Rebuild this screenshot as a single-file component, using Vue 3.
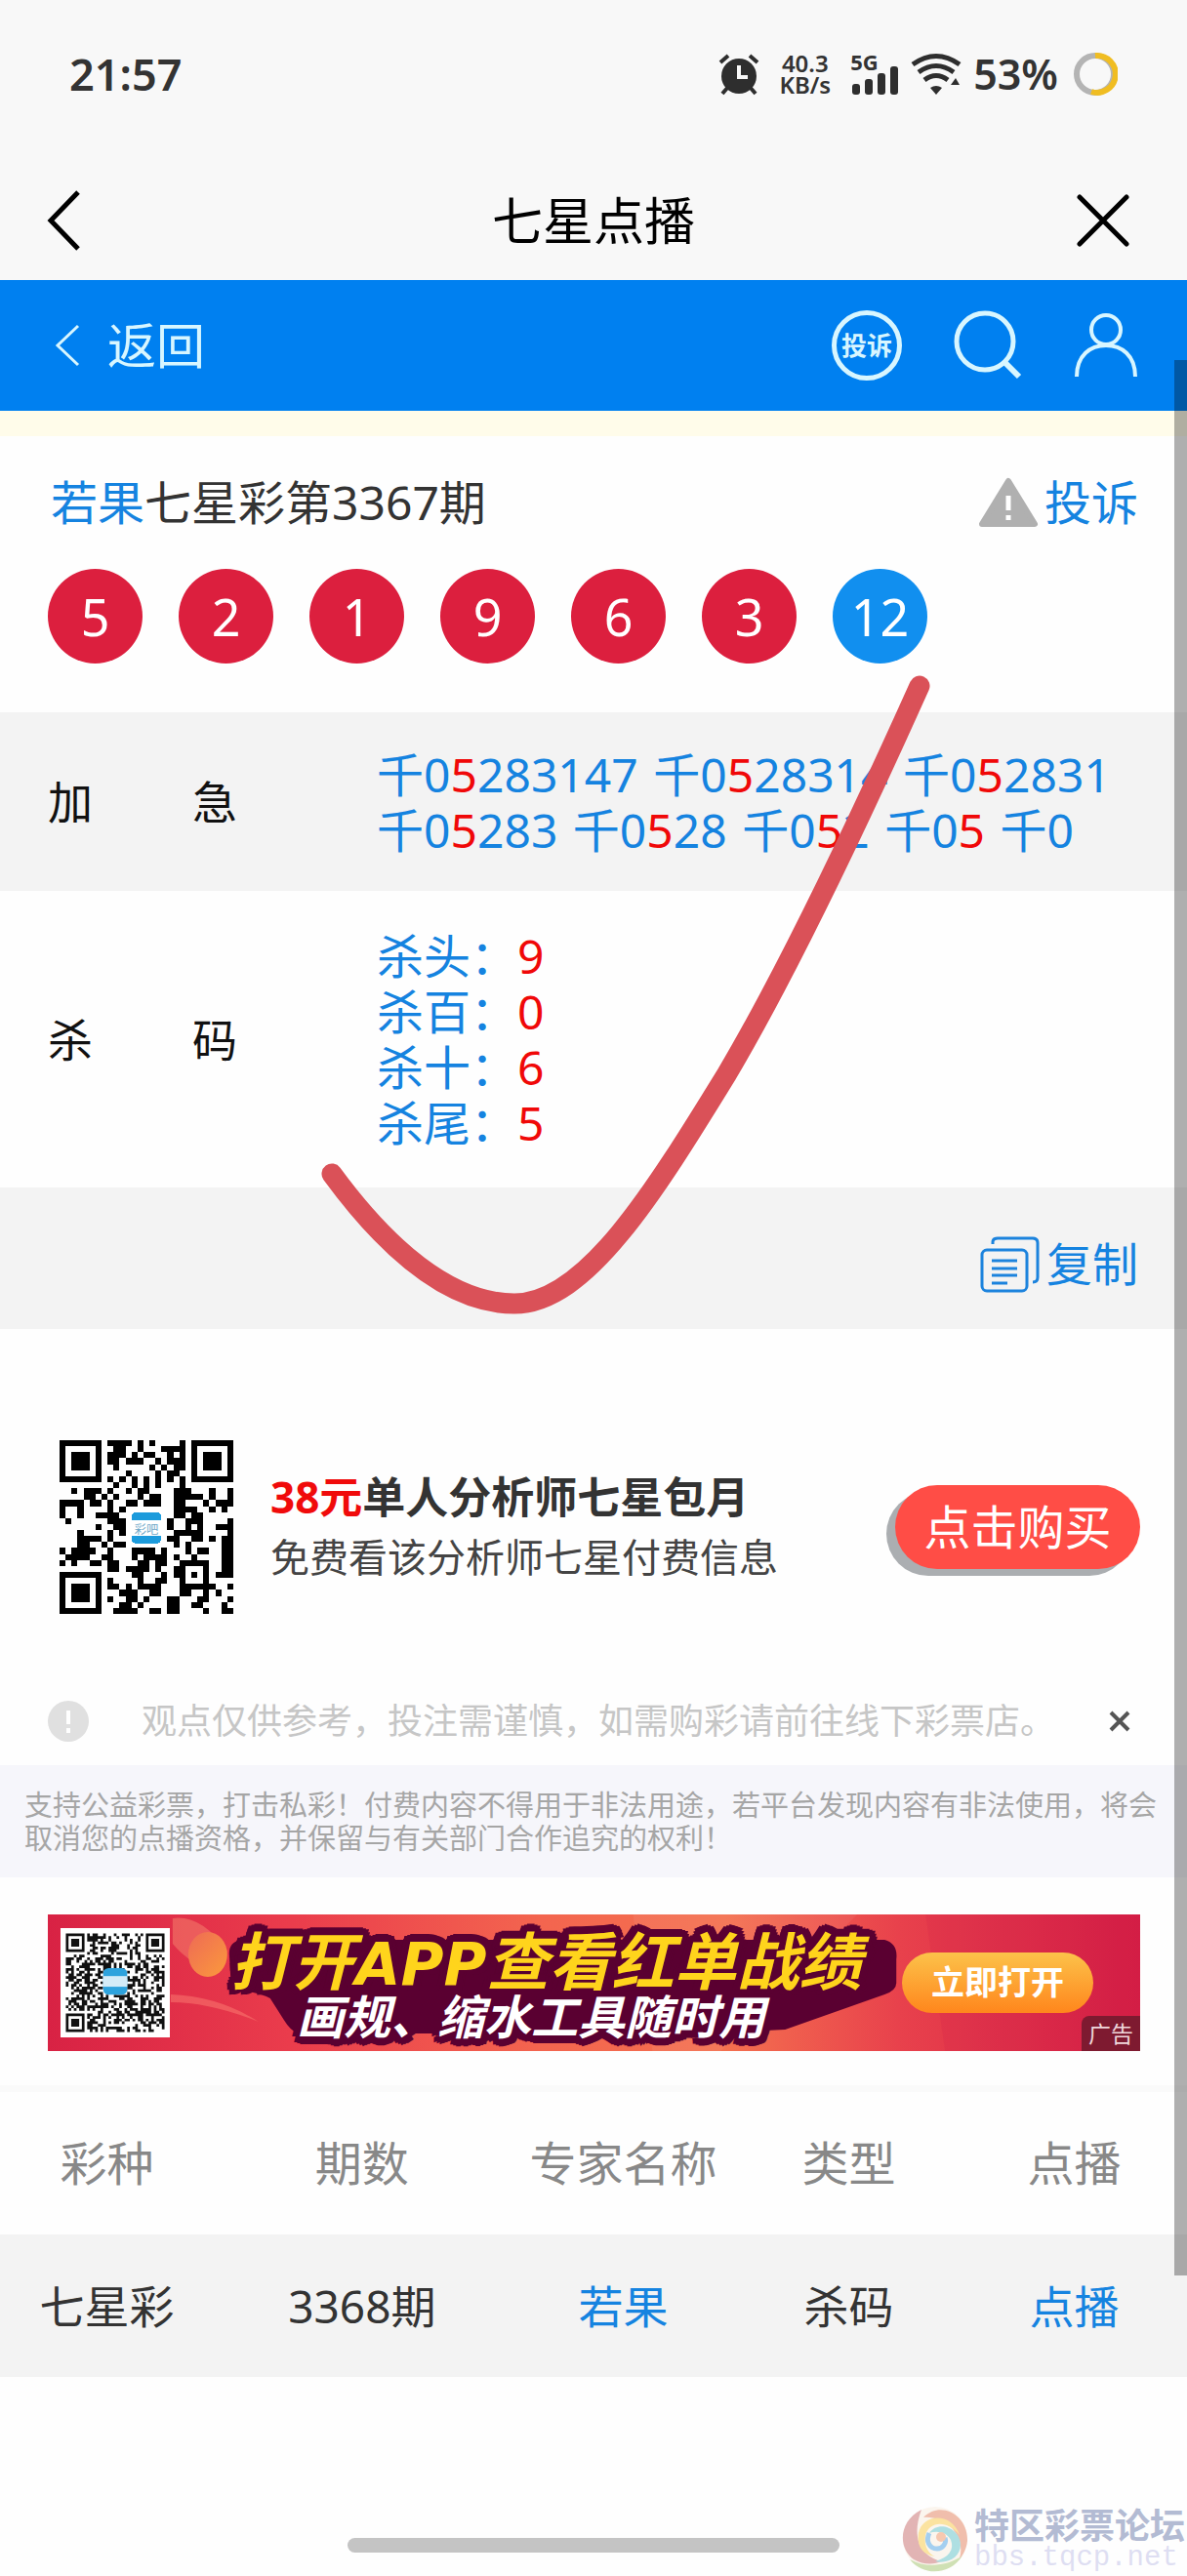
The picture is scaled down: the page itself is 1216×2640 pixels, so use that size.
<template>
  <div class="page">
    <div class="status-bar">
      <span class="clock">21:57</span>
      <div class="status-icons">
        <svg class="alarm" width="42" height="44" viewBox="0 0 42 44">
          <circle cx="21" cy="24" r="18" fill="#2e2e2e" />
          <path d="M2 10 10 3M40 10 32 3M4 42l6-7M38 42l-6-7" stroke="#2e2e2e" stroke-width="4" />
          <path d="M21 13v12h9" fill="none" stroke="#f8f8f8" stroke-width="4" />
        </svg>
        <div class="speed">
          <span>40.3</span>
          <span>KB/s</span>
        </div>
        <div class="signal">
          <span class="net">5G</span>
          <svg width="50" height="44" viewBox="0 0 50 44" fill="#2e2e2e">
            <rect x="2" y="32" width="8" height="11" rx="3" />
            <rect x="15" y="27" width="8" height="16" rx="3" />
            <rect x="28" y="21" width="8" height="22" rx="3" />
            <rect x="41" y="14" width="8" height="29" rx="3" />
          </svg>
        </div>
        <svg class="wifi" width="52" height="44" viewBox="0 0 52 44">
          <g fill="none" stroke="#2e2e2e" stroke-width="5">
            <path d="M2 12Q26-5 50 12" />
            <path d="M8 20Q26 7 44 20" />
            <path d="M14 28Q26 19 38 28" />
          </g>
          <path d="M20 36q6-4 12 0l-6 7z" fill="#2e2e2e" />
          <path d="M41 33h9l-4-7z" fill="#2e2e2e" />
        </svg>
        <span class="battery">53%</span>
        <svg class="ring" width="46" height="46" viewBox="0 0 46 46" fill="none" stroke-width="6">
          <circle cx="23" cy="23" r="19" stroke="#b4b4b4" />
          <path d="M23 4a19 19 0 1 1-4 37" stroke="#f0bd22" />
        </svg>
      </div>
    </div>

    <header class="title-bar">
      <button class="icon-btn" aria-label="后退">
        <svg width="36" height="64" viewBox="0 0 36 64">
          <path d="M32 3 4 32l28 29" fill="none" stroke="#000" stroke-width="5" />
        </svg>
      </button>
      <h1>七星点播</h1>
      <button class="icon-btn" aria-label="关闭">
        <svg width="54" height="54" viewBox="0 0 54 54">
          <path d="M3 3l48 48M51 3 3 51" stroke="#000" stroke-width="5" stroke-linecap="round" />
        </svg>
      </button>
    </header>

    <nav class="nav">
      <a href="#" class="back">
        <svg width="26" height="44" viewBox="0 0 26 44">
          <path d="M24 2 3 22l21 20" fill="none" stroke="#d8f6ff" stroke-width="3" />
        </svg>
        <span>返回</span>
      </a>
      <div class="nav-actions">
        <a href="#" class="badge">投诉</a>
        <a href="#" aria-label="搜索">
          <svg width="70" height="72" viewBox="0 0 70 72" fill="none" stroke="#d8f6ff" stroke-width="5">
            <circle cx="32" cy="32" r="29" />
            <path d="M52 53l15 15" stroke-width="6" />
          </svg>
        </a>
        <a href="#" aria-label="我的">
          <svg width="66" height="68" viewBox="0 0 66 68" fill="none" stroke="#d8f6ff" stroke-width="4">
            <circle cx="33" cy="18" r="15" />
            <path d="M3 66C3 44 17 34 33 34s30 10 30 32" />
          </svg>
        </a>
      </div>
    </nav>
    <div class="strip"></div>

    <main>
      <div class="results">
        <section class="draw">
          <div class="draw-head">
            <h2><a href="#">若果</a>七星彩第3367期</h2>
            <a href="#" class="action">
              <svg width="62" height="52" viewBox="0 0 62 52">
                <path d="M31 4 58 48H4z" fill="#b0b0b0" stroke="#b0b0b0" stroke-width="6" stroke-linejoin="round" />
                <path d="M31 19v15M31 39v5" stroke="#fff" stroke-width="5" />
              </svg>
              <span>投诉</span>
            </a>
          </div>
          <div class="balls">
            <span v-for="(n, i) in balls" :key="i" class="ball" :class="{ blue: i === 6 }">{{ n }}</span>
          </div>
        </section>

        <section class="row gray">
          <div class="label"><span>加</span><span>急</span></div>
          <div class="value">
            <template v-for="(g, i) in groups" :key="i">
              <span class="group">千<template v-for="(c, j) in g" :key="j"><i v-if="c === '5'">{{ c }}</i><template v-else>{{ c }}</template></template></span>{{ ' ' }}
            </template>
          </div>
        </section>

        <section class="row tall">
          <div class="label"><span>杀</span><span>码</span></div>
          <div class="value">
            <div v-for="k in kills" :key="k.name">{{ k.name }}：<i>{{ k.num }}</i></div>
          </div>
        </section>

        <section class="copy-row">
          <button class="action">
            <svg width="62" height="58" viewBox="0 0 62 58" fill="none" stroke="#1c83dd" stroke-width="3">
              <rect x="2" y="14" width="46" height="42" rx="5" />
              <path d="M13 8V6q0-4 5-4h36q5 0 5 5v35q0 5-5 5" />
              <path d="M12 25h26M12 33h26M12 40h26M12 48h16" />
            </svg>
            <span>复制</span>
          </button>
        </section>

        <svg class="tick" width="640" height="680" viewBox="320 680 640 680">
          <path
            d="M340 1203C395 1278 460 1336 527 1336C600 1336 670 1222 745 1100C810 990 885 830 942 703"
            fill="none" stroke="#da5158" stroke-width="21" stroke-linecap="round"
          />
        </svg>
      </div>

      <section class="offer">
        <svg class="qr" viewBox="0 0 29 29" shape-rendering="crispEdges">
          <path :d="qrPath" fill="#000" />
          <rect x="11" y="11" width="7" height="7" fill="#fff" />
          <path d="M12 13q0-1 1-1h3q1 0 1 1v.3h-5zM12 16h5v.3q0 1-1 1h-3q-1 0-1-1z" fill="#1c9bdc" />
          <text x="14.500" y="15.700" class="qr-logo">彩吧</text>
        </svg>
        <div class="offer-text">
          <p class="offer-title"><em>38元</em>单人分析师七星包月</p>
          <p class="offer-sub">免费看该分析师七星付费信息</p>
        </div>
        <button class="buy">点击购买</button>
      </section>

      <section class="notice">
        <svg width="42" height="42" viewBox="0 0 42 42">
          <circle cx="21" cy="21" r="21" fill="#e0e0e0" />
          <path d="M21 10v14M21 28v5" stroke="#fff" stroke-width="4" />
        </svg>
        <p>观点仅供参考，投注需谨慎，如需购彩请前往线下彩票店。</p>
        <button class="icon-btn" aria-label="关闭提示">
          <svg width="22" height="22" viewBox="0 0 22 22">
            <path d="M2 2l18 18M20 2 2 20" stroke="#555" stroke-width="4" />
          </svg>
        </button>
      </section>

      <p class="disclaimer">支持公益彩票，打击私彩！付费内容不得用于非法用途，若平台发现内容有非法使用，将会取消您的点播资格，并保留与有关部门合作追究的权利！</p>

      <section class="banner">
        <svg class="banner-art" viewBox="0 0 1120 140" preserveAspectRatio="none">
          <defs>
            <linearGradient id="coin" x1="0" y1="0" x2="1" y2="1">
              <stop offset="0" stop-color="#ee6a55" />
              <stop offset="1" stop-color="#fb9a3c" />
            </linearGradient>
          </defs>
          <path d="M600 0h230L690 140H620z" fill="#fff" opacity=".06" />
          <path d="M900 0h220v140H920z" fill="#c8104a" opacity=".12" />
          <path d="M126 82q50 2 90 28-50-20-90-20z" fill="#ff8878" opacity=".45" />
          <path d="M128 4q30-4 56 34l-8 22q-30-8-48-30z" fill="#f4806c" opacity=".55" />
          <ellipse cx="164" cy="41" rx="20" ry="23" fill="url(#coin)" />
          <path d="M186 40q0-12 12-14h660q14 4 12 20v24q0 8-12 12L756 118q-120 6-300 4H256q-8-4-14-14l-14-22q-10-6-40-10z" fill="#5a0031" />
        </svg>
        <svg class="qr small" viewBox="-2 -2 41 41">
          <rect x="-2" y="-2" width="41" height="41" fill="#fff" />
          <path :d="densePath" fill="#111" />
          <rect x="14" y="14" width="9" height="9" fill="#fff" />
          <rect x="14" y="13" width="9" height="10" rx="2" fill="#2ea3dd" />
          <rect x="14" y="16" width="9" height="4" fill="#d4ecf8" />
        </svg>
        <div class="slogan">
          <p class="slogan-main">打开<b>APP</b>查看红单战绩</p>
          <p class="slogan-sub">画规、缩水工具随时用</p>
        </div>
        <a href="#" class="open">立即打开</a>
        <span class="ad">广告</span>
      </section>

      <table class="list">
        <thead>
          <tr>
            <th v-for="h in heads" :key="h">{{ h }}</th>
          </tr>
        </thead>
        <tbody>
          <tr v-for="r in rows" :key="r.issue">
            <td>{{ r.game }}</td>
            <td>{{ r.issue }}</td>
            <td><a href="#">{{ r.expert }}</a></td>
            <td>{{ r.type }}</td>
            <td><a href="#">点播</a></td>
          </tr>
        </tbody>
      </table>
    </main>

    <div class="scrollbar"></div>
    <div class="home-bar"></div>
    <div class="watermark">
      <svg width="68" height="68" viewBox="0 0 68 68" fill="none">
        <circle cx="34" cy="34" r="33" fill="#fbf5ee" />
        <path d="M20 4C-4 16-4 44 12 55c10 6 22 5 28 2C22 52 8 36 20 4z" fill="#e2b4b4" />
        <path d="M8 55c14 18 42 16 54-4-14 10-36 14-54 4z" fill="#cfe0b4" />
        <path d="M22 12C40-6 68 10 67 36c-1 8-4 14-8 18C66 30 44 10 22 12z" fill="#f0beac" />
        <path d="M17 28c4-20 34-22 42 2C46 14 28 16 24 30c-2 12 4 20 10 22C20 50 15 40 17 28z" fill="#fbe3a0" />
        <path d="M28 28c10-14 32-4 32 12 0 12-12 20-26 17 14-4 20-12 16-22-4-8-14-10-22-7z" fill="#aedfe2" />
        <path d="M28 28c-4 8 0 16 8 16 6 0 10-6 8-11" stroke="#a4cff0" stroke-width="5" />
        <circle cx="40" cy="32" r="5" fill="#f6c8b0" />
      </svg>
      <div>
        <div class="wm-name">特区彩票论坛</div>
        <div class="wm-url">bbs.tqcp.net</div>
      </div>
    </div>
  </div>
</template>

<script setup>
const balls = [5, 2, 1, 9, 6, 3, 12]
const groups = ['05283147', '0528314', '052831', '05283', '0528', '052', '05', '0']
const kills = [
  { name: '杀头', num: 9 },
  { name: '杀百', num: 0 },
  { name: '杀十', num: 6 },
  { name: '杀尾', num: 5 }
]
const heads = ['彩种', '期数', '专家名称', '类型', '点播']
const rows = [{ game: '七星彩', issue: '3368期', expert: '若果', type: '杀码' }]

const qrRows = [
  '#######.####.#.#....#.#######',
  '#.....#..##..#...####.#.....#',
  '#.###.#.###.#.##..#.#.#.###.#',
  '#.###.#.##.###..#.###.#.###.#',
  '#.###.#..#.....#.#.##.#.###.#',
  '#.....#....#....#.##..#.....#',
  '#######.#.#.#.#.#.#.#.#######',
  '.........#..#.#.#...#........',
  '..#.###.#..#.##....###...#..#',
  '....##.#.#...#.##..#####.#..#',
  '####.##.#..##.###..##...#.###',
  '#..#....#.#........####..#.#.',
  '#..#..####.........##.##.....',
  '.#......###.......#..###....#',
  '......#..##.......#..#.#..###',
  '...#....#.#........#####....#',
  '...####.#.........##..##.#.##',
  '...##..#.##........#.#.....##',
  '#.####..#...####.#...#.##..##',
  '.####..##...#.####.#..#....##',
  '#.#..##.##...##.##..#####..##',
  '........##.####.#..##...#..##',
  '#######.....##...#.##.#.#.###',
  '#.....#.#....#..##..#...#....',
  '#.###.#.##.#.####...######..#',
  '#.###.#...###..##...##..#.#..',
  '#.###.#.#..##.#...##...##...#',
  '#.....#...##.#....##..##...#.',
  '#######..####..##.##....#..##'
]

const toPath = (lines) =>
  lines.map((line, y) => [...line].map((c, x) => (c === '#' ? `M${x} ${y}h1v1h-1z` : '')).join('')).join('')

// 37x37 code for the banner
const denseRows = () => {
  const size = 37
  const finder = (x, y) => {
    const corners = [[0, 0], [size - 7, 0], [0, size - 7]]
    for (const [cx, cy] of corners) {
      const dx = Math.abs(x - cx - 3)
      const dy = Math.abs(y - cy - 3)
      const d = Math.max(dx, dy)
      if (d <= 4) return d === 3 || d <= 1 ? '#' : '.'
    }
    return null
  }
  let seed = 3367
  const out = []
  for (let y = 0; y < size; y++) {
    let line = ''
    for (let x = 0; x < size; x++) {
      seed = (seed * 1103515245 + 12345) % 2147483648
      line += finder(x, y) ?? (seed / 2147483648 > 0.5 ? '#' : '.')
    }
    out.push(line)
  }
  return out
}

const qrPath = toPath(qrRows)
const densePath = toPath(denseRows())
</script>

<style>
body {
  margin: 0;
  background: #fefefe;
}
</style>

<style scoped>
.page {
  position: relative;
  min-height: 100vh;
  font-family: "Noto Sans", "Noto Sans CJK SC", sans-serif;
  font-size: 48px;
  line-height: 1.5;
  color: #333;
  background: #fefefe;
}
h1, h2, p {
  margin: 0;
  font-weight: 400;
}
a {
  color: #1583e0;
  text-decoration: none;
}
i, em {
  font-style: normal;
}
svg {
  display: block;
  flex: none;
}
button {
  padding: 0;
  border: 0;
  background: none;
  font: inherit;
  color: inherit;
}

.status-bar {
  display: flex;
  align-items: center;
  justify-content: space-between;
  height: 152px;
  padding: 0 71px;
  background: #f8f8f8;
}
.clock {
  font-size: 45px;
  font-weight: 600;
}
.status-icons {
  display: flex;
  align-items: center;
}
.speed {
  display: flex;
  flex-direction: column;
  align-items: center;
  margin-left: 20px;
  font-size: 24px;
  font-weight: 600;
  line-height: 22px;
}
.signal {
  position: relative;
  margin-left: 20px;
}
.net {
  position: absolute;
  left: 0;
  top: 0;
  font-size: 22px;
  font-weight: 700;
  line-height: 18px;
}
.wifi {
  margin-left: 12px;
}
.battery {
  margin-left: 12px;
  font-size: 43px;
  font-weight: 600;
}
.ring {
  margin-left: 15px;
}

.title-bar {
  display: grid;
  grid-template-columns: 1fr auto 1fr;
  align-items: center;
  height: 135px;
  padding-top: 12px;
  box-sizing: border-box;
  color: #000;
  background: #f8f8f8;
}
.title-bar h1 {
  font-size: 52px;
}
.title-bar .icon-btn:first-child {
  justify-self: start;
  margin-left: 48px;
}
.title-bar .icon-btn:last-child {
  justify-self: end;
  margin-right: 59px;
}

.nav {
  display: flex;
  align-items: center;
  justify-content: space-between;
  height: 134px;
  padding: 0 50px 0 56px;
  background: #0080f0;
}
.nav a {
  color: #d8f6ff;
}
.back {
  display: flex;
  align-items: center;
  gap: 28px;
  font-size: 50px;
}
.nav-actions {
  display: flex;
  align-items: center;
  gap: 53px;
}
.badge {
  display: flex;
  align-items: center;
  justify-content: center;
  width: 72px;
  height: 72px;
  box-sizing: border-box;
  border: 5px solid #d8f6ff;
  border-radius: 50%;
  font-size: 26px;
  font-weight: 700;
}
.strip {
  height: 26px;
  background: #fffcea;
}

.results {
  position: relative;
}
.draw {
  height: 283px;
  padding: 32px 50px 0 49px;
  box-sizing: border-box;
}
.draw-head {
  display: flex;
  align-items: center;
  justify-content: space-between;
}
.draw-head h2 {
  padding-left: 3px;
  font-size: 48px;
}
.action {
  display: flex;
  align-items: center;
  gap: 6px;
  color: #1583e0;
}
.balls {
  display: flex;
  gap: 37px;
  margin-top: 32px;
}
.ball {
  display: flex;
  align-items: center;
  justify-content: center;
  width: 97px;
  height: 97px;
  border-radius: 50%;
  background: #dc1f3e;
  color: #fff;
  font-size: 52px;
  line-height: 60px;
}
.ball.blue {
  background: #118fef;
}
.row {
  display: flex;
  align-items: center;
  height: 183px;
  padding: 0 50px 0 49px;
}
.row.tall {
  height: 304px;
}
.gray {
  background: #f3f3f3;
}
.label {
  display: flex;
  justify-content: space-between;
  width: 194px;
  flex: none;
  font-size: 46px;
  color: #111;
}
.value {
  margin-left: 143px;
  color: #1583e0;
  line-height: 57px;
}
.group {
  margin-right: 3px;
  white-space: nowrap;
}
.value i {
  color: #f00808;
}
.copy-row {
  display: flex;
  justify-content: flex-end;
  align-items: center;
  height: 145px;
  padding: 12px 50px 0;
  box-sizing: border-box;
  background: #f3f3f3;
}
.copy-row .action {
  font-size: 47px;
}
.tick {
  position: absolute;
  left: 320px;
  top: 233px;
  pointer-events: none;
}

.offer {
  display: flex;
  align-items: center;
  padding: 114px 48px 65px 61px;
}
.qr {
  width: 178px;
  height: 178px;
}
.qr-logo {
  font-size: 2px;
  fill: #6fa8c8;
  text-anchor: middle;
}
.offer-text {
  flex: 1;
  margin-left: 38px;
  line-height: 61px;
}
.offer-title {
  font-size: 44px;
  font-weight: 700;
}
.offer-title em {
  color: #f00b0b;
}
.offer-sub {
  font-size: 40px;
  color: #444;
}
.buy {
  width: 251px;
  height: 86px;
  border-radius: 43px;
  background: #ff4d46;
  box-shadow: -9px 7px 0 #abaeb1;
  color: #fff;
  line-height: 86px;
}

.notice {
  display: flex;
  align-items: center;
  height: 90px;
  padding: 0 58px 0 49px;
}
.notice p {
  flex: 1;
  margin-left: 54px;
  font-size: 36px;
  color: #c6c6c6;
  white-space: nowrap;
}
.disclaimer {
  padding: 24px 25px 23px;
  background: #f6f6fb;
  font-size: 29px;
  line-height: 34px;
  color: #a6a6a6;
}

.banner {
  position: relative;
  display: flex;
  align-items: center;
  height: 140px;
  margin: 38px 48px 35px 49px;
  background: linear-gradient(90deg, #d82244, #ea3c4c 22%, #f3654f 45%, #f4704f 62%, #e8414c 78%, #d51f45);
}
.banner-art {
  position: absolute;
  left: 0;
  top: 0;
  width: 100%;
  height: 100%;
}
.qr.small {
  position: relative;
  width: 112px;
  height: 112px;
  margin-left: 13px;
}
.slogan {
  position: relative;
  flex: 1;
  min-width: 0;
  margin-left: 62px;
  font-family: "Noto Sans CJK SC", sans-serif;
  font-weight: 700;
  font-style: italic;
  white-space: nowrap;
}
.slogan-main {
  font-weight: 700;
  font-size: 64px;
  line-height: 56px;
  color: #ffd41c;
  text-shadow: 0 -8px #5a0031, 3px -7px #5a0031, -3px -7px #5a0031, 6px -6px #5a0031, -6px -6px #5a0031,
    7px -3px #5a0031, -7px -3px #5a0031, 8px 0 #5a0031, -8px 0 #5a0031, 6px 5px #5a0031, -6px 5px #5a0031,
    0 -4px #5a0031, 4px 0 #5a0031, -4px 0 #5a0031;
}
.slogan-main b {
  font-family: "DejaVu Sans", sans-serif;
  font-size: 60px;
}
.slogan-sub {
  margin-left: 68px;
  font-weight: 700;
  font-size: 48px;
  line-height: 46px;
  color: #fff;
  text-shadow: 0 8px #5a0031, 3px 7px #5a0031, -3px 7px #5a0031, 6px 6px #5a0031, -6px 6px #5a0031,
    8px 0 #5a0031, -8px 0 #5a0031, 0 4px #5a0031, 4px 0 #5a0031, -4px 0 #5a0031;
}
.open {
  position: relative;
  flex: none;
  width: 196px;
  height: 62px;
  margin-right: 48px;
  border-radius: 31px;
  background: linear-gradient(#fcc24a, #ff861c);
  color: #fff;
  font-size: 34px;
  font-weight: 700;
  line-height: 60px;
  text-align: center;
}
.ad {
  position: absolute;
  right: 0;
  bottom: 0;
  width: 60px;
  border-radius: 8px 0 0 0;
  background: #7e1a30;
  color: #f0d8dc;
  font-size: 23px;
  line-height: 36px;
  text-align: center;
}

.list {
  width: 100%;
  border-collapse: collapse;
  table-layout: fixed;
  border-top: 7px solid #fafafa;
  text-align: center;
}
.list th, .list td {
  height: 146px;
  padding: 0;
}
.list th {
  font-weight: 400;
  color: #888;
}
.list th:nth-child(1) { width: 18%; }
.list th:nth-child(2) { width: 25%; }
.list th:nth-child(3) { width: 19%; }
.list th:nth-child(4) { width: 19%; }
.list td {
  background: #f3f3f3;
  font-size: 46px;
}

.scrollbar {
  position: absolute;
  top: 369px;
  right: 0;
  width: 13px;
  height: 1963px;
  background: rgba(0, 0, 0, 0.31);
}
.home-bar {
  position: absolute;
  left: 50%;
  bottom: 24px;
  width: 504px;
  height: 15px;
  margin-left: -252px;
  border-radius: 8px;
  background: #c4c4c4;
}
.watermark {
  position: absolute;
  right: 2px;
  bottom: 4px;
  display: flex;
  align-items: center;
  gap: 6px;
}
.wm-name {
  font-size: 36px;
  font-weight: 700;
  line-height: 40px;
  color: #b3bbd3;
}
.wm-url {
  font-family: "Liberation Mono", monospace;
  font-size: 29px;
  line-height: 26px;
  color: #dedef2;
}
</style>
